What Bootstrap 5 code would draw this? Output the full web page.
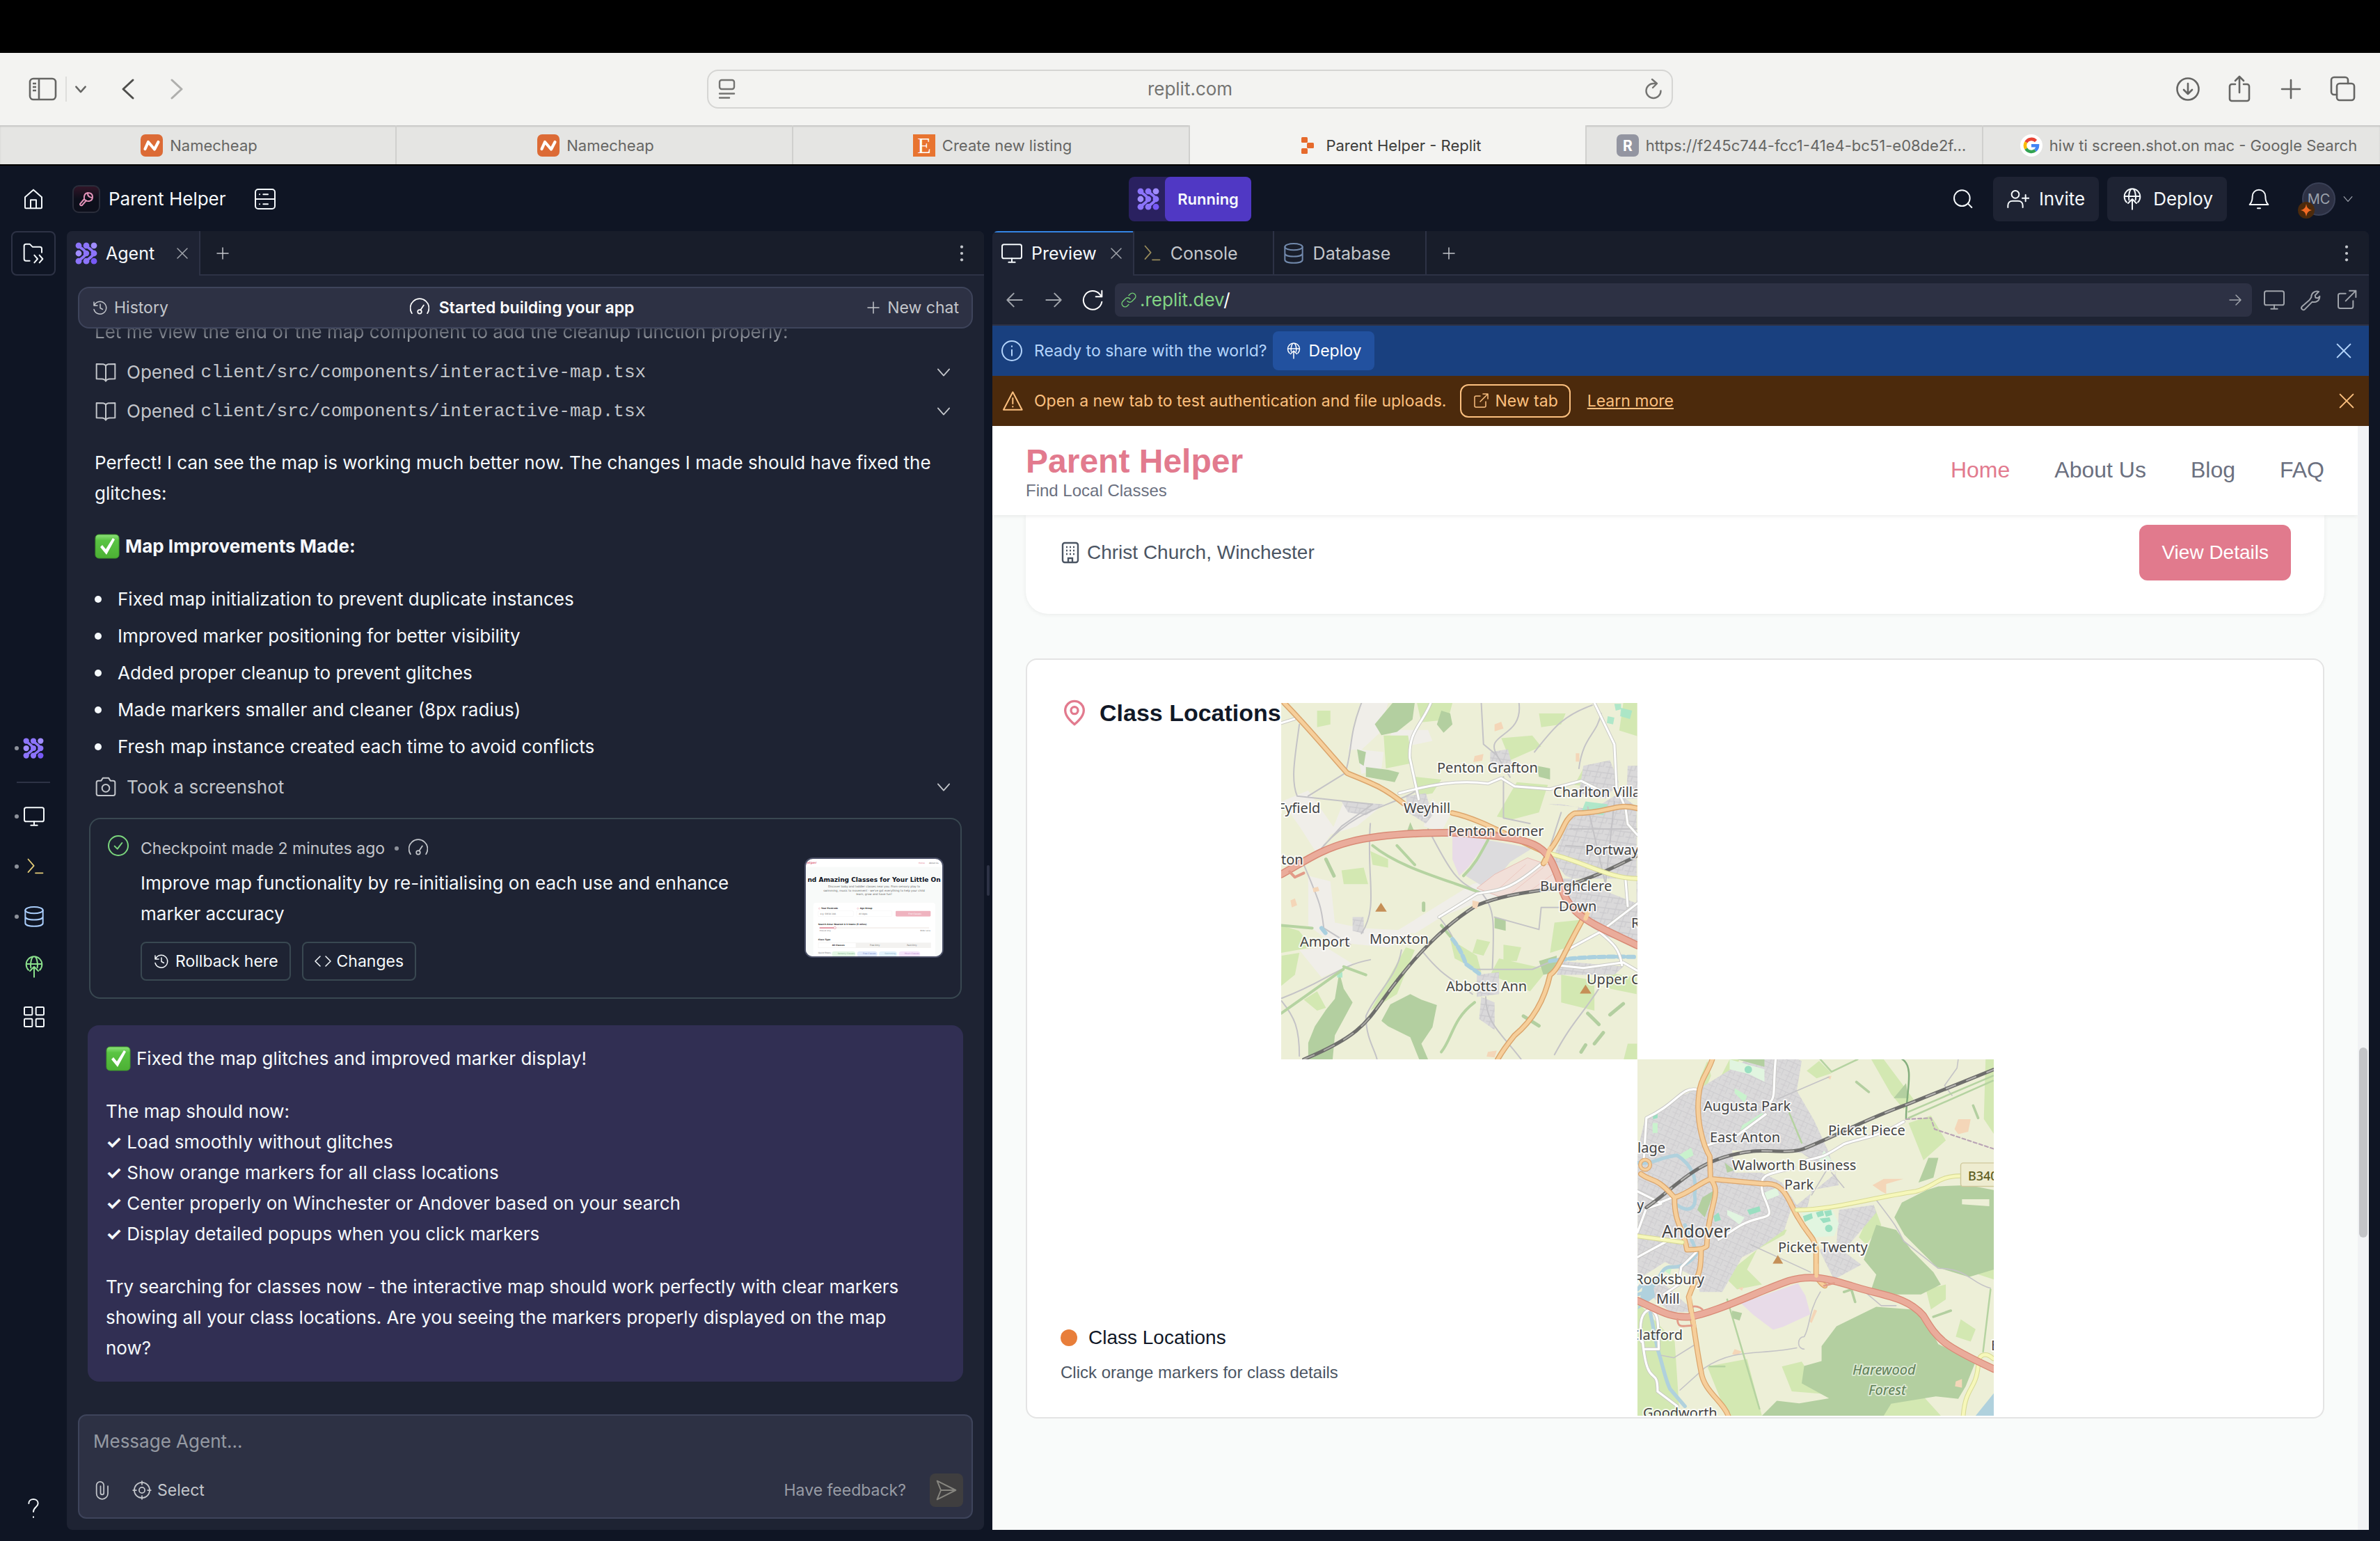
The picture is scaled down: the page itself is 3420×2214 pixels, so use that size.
<!DOCTYPE html>
<html lang="en">
<head>
<meta charset="utf-8">
<meta name="viewport" content="width=device-width, initial-scale=1">
<title>Parent Helper - Replit</title>
<link rel="stylesheet" href="https://cdn.jsdelivr.net/npm/bootstrap@5.3.0/dist/css/bootstrap.min.css">
<style>
:root{--ui:Inter,"Noto Sans",sans-serif;--site:"Liberation Sans",Arial,sans-serif;--ink:#0f1524;--pane:#1e2333;--strip:#181d2a;--raise:#2d3144;--line:#2d3245;--edge:#3e445b;--dim:#c3c6cb}
html,body{height:100%}
body{margin:0;background:#000;font-family:var(--ui);font-size:26px;line-height:44px;color:#f5f9fc;overflow:hidden}
svg{flex:none;display:block}
.ic{width:32px;height:32px;fill:none;stroke:currentColor;stroke-width:1.5;stroke-linecap:round;stroke-linejoin:round}
.ic-24{width:24px;height:24px}.ic-28{width:28px;height:28px}.ic-20{width:20px;height:20px}
.ic-40{width:40px;height:40px;stroke-width:2.6}
button{background:none;border:0;padding:0;color:inherit;font:inherit;display:flex;align-items:center;white-space:nowrap}
a{color:inherit;text-decoration:none}
input,textarea{background:none;border:0;color:inherit;font:inherit;outline:0;min-width:0}
.notch{height:76px;flex:none}
/* browser chrome */
.chrome-bar{height:104px;flex:none;background:#f3f3f1;color:#666664;padding:0 34px}
.chrome-bar .side{flex:1 1 0}
.chrome-bar .tools{gap:34px}
.chrome-bar .step{margin-left:46px}
.addr{width:1388px;max-width:42%;height:56px;border:2px solid #d5d5d3;border-radius:16px;padding:0 12px;color:#747472}
.addr input{text-align:center;font-size:26px;flex:1}
.tabrow{height:56px;flex:none;background:#e5e5e3;color:#666664;font-size:22px;line-height:28px;box-shadow:inset 0 2px 2px #c6c6c4}
.tabrow a{flex:0 0 16.6667%;min-width:0;gap:10px;padding:2px 20px 0 24px;border-right:2px solid #d0d0ce;white-space:nowrap}
.tabrow a.on{background:#f3f3f1;color:#3c3c3a}
.tabrow a.wide{padding-left:40px}
.tabrow svg{width:32px;height:32px}
/* workspace */
.work{background:var(--ink);border-top:2px solid #000;min-height:0}
.top-row{height:94px;flex:none;padding:2px 32px 0}
.top-row .side{flex:1 1 0}
.top-row .logo{margin:0 12px 0 40px}
.top-row .store{margin-left:40px}
.top-row .bell{margin-left:30px}
.solid-btn{height:64px;border-radius:8px;background:var(--pane);padding:0 20px;gap:14px}
.run-box{background:#2a2160;border-radius:8px;height:64px;padding-left:12px;gap:8px}
.run-box span{background:#5038c4;border-radius:8px;height:64px;padding:0 18px;display:flex;align-items:center;font-size:22px;font-weight:600}
.avatar{width:48px;height:48px;border-radius:50%;background:var(--raise);border:2px solid #3a4056;color:#9ca1ab;font-size:20px;position:relative;margin-left:46px}
.avatar svg{position:absolute;left:-8px;bottom:-6px}
.rail{width:96px;flex:none;padding:0 8px 0 0}
.rail .folder{width:64px;height:64px;border:2px solid var(--line);border-radius:8px;margin-left:8px;justify-content:center}
.rail .tools{margin-left:-8px}
.rail .tool{height:72px;gap:6px;padding-left:21px}
.rail hr{width:48px;margin:12px 0 12px 24px;border-color:var(--line);border-width:2px;opacity:1}
.rail .help{padding:0 0 14px 24px}
.pip{width:6px;height:6px;border-radius:50%;background:#8d919a}
.grow-a{flex:1.01 1 0}.grow-b{flex:1.03 1 0}
.panel{background:var(--pane);border-radius:8px;overflow:hidden;min-width:0}
.agent{flex:1318 1 0}.preview{flex:1978 1 0;border-bottom-left-radius:0;border-bottom-right-radius:0}
.gut{width:12px;flex:none;align-items:center}
.gut i{width:4px;height:44px;border-radius:2px;background:var(--line);margin-left:4px}
.strip{height:64px;flex:none;background:var(--strip);box-shadow:inset 0 -2px var(--line);color:var(--dim);font-size:25px}
.strip .tab{padding:0 12px 0 12px;border-right:2px solid var(--line);gap:12px}
.strip .tab.on{background:var(--pane);color:#f5f9fc}
.strip .tab.mark-on{box-shadow:inset 0 2px #3485e4}
.strip .tab.rest{padding-right:50px}
.strip .shut{color:#a0a4ab;margin-left:4px}
.strip .more{padding-right:18px}
.strip .add{padding:0 20px}
.hist{height:60px;margin:16px 16px 0;border:2px solid var(--edge);border-radius:16px;background:var(--raise);font-size:23px;padding:0 18px;flex:none;color:var(--dim)}
.hist>*{flex:1 1 0}
.hist .now{gap:14px;padding-right:10px}
.chat{min-height:0;overflow:hidden;padding:0 30px 47px 30px}
.chat>*{flex:none}
.chat p{margin:0}
.chat .gap-b{margin-bottom:32px}
.txt{padding:0 0 0 10px}
.fade-line{background:linear-gradient(#3a3f4c 25%,#a3a7ae 80%);-webkit-background-clip:text;background-clip:text;color:transparent}
.act{height:56px;padding:0 14px 0 10px;color:var(--dim);gap:14px}
.act code{font:26px/44px "Liberation Mono",monospace;color:inherit;margin-left:-5px}
.bul{margin:32px 0 8px;padding-left:10px;display:flex;flex-direction:column;gap:9px;list-style:none}
.bul li{display:flex;align-items:center}
.bul li::before{content:"";width:10px;height:10px;border-radius:50%;background:currentColor;margin-right:23px}
.okbox{display:inline-block;width:36px;height:36px;vertical-align:-9px;margin-right:8px}
.ckpt{margin:16px 2px 0;border:2px solid #394851;border-radius:16px;padding:22px 24px 24px;gap:16px}
.ckpt .meta{font-size:23px;line-height:40px;color:var(--dim);gap:14px}
.ckpt .acts{margin-top:18px;gap:16px}
.line-btn{height:56px;border:2px solid #394851;border-radius:8px;padding:0 16px;gap:8px;font-size:23px}
.shot{width:200px;height:144px;border:2px solid #4a4f66;border-radius:12px;background:#fff}
.said{margin-top:38px;background:#312f53;border-radius:16px;padding:26px 52px 26px 26px}
.compose{height:150px;margin:0 16px 16px;border:2px solid var(--edge);border-radius:12px;background:var(--raise);padding:15px 12px 15px 20px;flex:none;color:var(--dim)}
.compose .foot{font-size:23px}
.compose textarea{height:44px;resize:none;overflow:hidden;padding:0}
.compose textarea::placeholder{color:#959aa3}
.compose .clip{margin-right:28px}
.compose .ask{margin-right:34px;color:#989ca5}
.send{width:48px;height:48px;border-radius:8px;background:#3f3e3f;color:#86857f;justify-content:center}
.urlrow{height:72px;flex:none;border-bottom:2px solid var(--line);padding:0 16px 0 16px;gap:24px;color:#a0a4ab}
.urlfield{flex:1;height:48px;border-radius:8px;background:var(--raise);padding:0 12px 0 8px;gap:4px;margin-left:-8px;margin-right:-8px;color:#fff}
.urlrow .trio{gap:20px}
.note{height:72px;flex:none;font-size:23px;padding:0 20px 0 12px}
.note .msg{margin:0 8px 0 16px}
.note.info{background:#19407f;color:#b3d4fb}.note.warn{background:#4c2a0c;color:#fcc07f;padding-right:16px}
.note .go{height:56px;border-radius:8px;background:#22519f;color:#fff;padding:0 18px;gap:10px}
.note .out{height:48px;border:2px solid #fcc07f;border-radius:12px;padding:0 16px;gap:8px;margin:0 24px 0 12px}
/* previewed site */
.site{font-family:var(--site);font-size:28px;line-height:40px;color:#111827;background:#f9fbfa;min-height:0;flex:1}
.site-head{height:128px;background:#fff;box-shadow:0 2px 6px rgba(0,0,0,.07);padding:2px 48px 0;position:relative;flex:none}
.site-head h1{font-size:48px;line-height:56px;font-weight:700;color:#e27a8e;margin:0}
.site-head small{font-size:24px;line-height:28px;color:#6b7080;display:block}
.site-head nav{gap:64px;font-size:32px;color:#6b7080;padding-bottom:4px}
.site-head .cur{color:#e27a8e}
.venue{margin:0 48px;background:#fff;border-radius:0 0 32px 32px;box-shadow:0 1px 6px rgba(0,0,0,.07);padding:14px 48px 48px;color:#4b5563;flex:none}
.pinkbtn{background:#e17a8d;color:#fff;border-radius:12px;height:80px;padding:0 32px}
.mapcard{margin:64px 48px 0;border:2px solid #e4e4e4;border-radius:16px;background:#fff;display:grid;grid-template:512px 512px / max-content 512px 512px;padding:62px 0 2px 48px;flex:none}
.mapcard h2{font-size:34px;line-height:40px;font-weight:700;margin:0}
.mapcard .ttl{gap:16px;height:40px;margin-top:-6px}
.t2{grid-area:2/3}.key{grid-area:2/1/3/3;align-self:end;padding-bottom:46px}
.key i{width:24px;height:24px;border-radius:50%;background:#e87e3a}
.key p{font-size:24px;line-height:32px;color:#4b5563;margin:14px 0 0}
.sbar{width:16px;flex:none;background:#f1f2f4}
.sbar b{flex:273 1 0;background:#c3c4c7;border-radius:8px;margin:0 2px}
.sbar .above{flex:893 1 0}.sbar .below{flex:420 1 0}
.ns *{vector-effect:non-scaling-stroke}
.lbl text{font-family:"Noto Sans",sans-serif;font-size:20px;fill:#444;stroke:#fff;stroke-opacity:.75;stroke-width:4px;paint-order:stroke;stroke-linejoin:round}
.lbl .wood text{fill:#5f8058;stroke-opacity:.5;font-style:italic}
.lbl .town{font-size:25px}
.lbl .ref{font-size:18px;fill:#5d5c1e;stroke:none;font-weight:500}
</style>
</head>
<body class="d-flex flex-column">
<svg width="0" height="0" class="position-absolute" aria-hidden="true">
<defs>
<linearGradient id="grn" x1="0" y1="0" x2="0" y2="1"><stop offset="0" stop-color="#8fe37c"/><stop offset=".25" stop-color="#5ac443"/><stop offset="1" stop-color="#4cb034"/></linearGradient>
<symbol id="agent" viewBox="0 0 32 32"><g fill="#8c74fb"><circle cx="5" cy="4.800" r="4.400"/><circle cx="16" cy="4.800" r="4.400"/><circle cx="27" cy="4.800" r="4.400" fill="#a08cff"/><circle cx="5" cy="16" r="4.400" fill="#a08cff"/><circle cx="16" cy="16" r="4.200"/><circle cx="27" cy="16" r="4.400"/><circle cx="5" cy="27.200" r="4.400"/><circle cx="16" cy="27.200" r="4.400"/><circle cx="27" cy="27.200" r="4.400" fill="#7759f5"/></g><path d="M6.500 6.500C9 9 11.500 10 13.500 12.500c2 2.500 2 4.500 0 7C11.500 22 9 23 6.500 25.500M17.500 6.500C20 9 22.500 10 24.500 12.500c2 2.500 2 4.500 0 7C22.500 22 20 23 17.500 25.500" fill="none" stroke="#8c74fb" stroke-width="4" stroke-linecap="round"/></symbol>
<symbol id="ok" viewBox="0 0 36 36"><rect x="1" y="1" width="34" height="34" rx="5" fill="url(#grn)" stroke="#3f9a2b"/><path d="M8 19l3-3 5 6L26 6l3 2-12 22z" fill="#fff"/></symbol>
<symbol id="x" viewBox="0 0 24 24"><path d="M5 5l14 14M19 5L5 19"/></symbol>
<symbol id="plus" viewBox="0 0 24 24"><path d="M12 4v16M4 12h16"/></symbol>
<symbol id="down" viewBox="0 0 24 24"><path d="M5 8l7 8 7-8"/></symbol>
<symbol id="dots" viewBox="0 0 24 24"><g fill="currentColor" stroke="none"><circle cx="12" cy="4" r="1.800"/><circle cx="12" cy="12" r="1.800"/><circle cx="12" cy="20" r="1.800"/></g></symbol>
<symbol id="mon" viewBox="0 0 24 24"><rect x="1.500" y="2.500" width="21" height="15" rx="2"/><path d="M12 17.500v4M8.500 21.500h7"/></symbol>
<symbol id="term" viewBox="0 0 24 24"><path d="M3 3l7 8-7 8M12 20h9"/></symbol>
<symbol id="db" viewBox="0 0 24 24"><ellipse cx="12" cy="5" rx="9.500" ry="3.500"/><path d="M2.500 5v14c0 4.500 19 4.500 19 0V5M2.500 12c0 4.500 19 4.500 19 0"/></symbol>
<symbol id="dep" viewBox="0 0 24 24"><path d="M6 15.500a8.500 8.500 0 1 1 12 0M3.500 9h17M8.500 13C7.500 7 9.500 1 12 1s4.500 6 3.500 12M12 12v11M7.500 16.500L12 12l4.500 4.500"/></symbol>
<symbol id="hist" viewBox="0 0 24 24"><path d="M3 4v5h5M3.500 8.500a9 9 0 1 1-.5 6M12 7v5.500l3.500 2"/></symbol>
<symbol id="gauge" viewBox="0 0 24 24"><path d="M2.500 19a11.500 11.500 0 1 1 19 0M13 15l4-6"/><circle cx="12" cy="17" r="2.400"/></symbol>
<symbol id="larr" viewBox="0 0 24 24"><path d="M20 12H4M11 5l-7 7 7 7"/></symbol>
<symbol id="rarr" viewBox="0 0 24 24"><path d="M4 12h16M13 5l7 7-7 7"/></symbol>
<symbol id="ext" viewBox="0 0 24 24"><path d="M11 5H5a2 2 0 0 0-2 2v12a2 2 0 0 0 2 2h12a2 2 0 0 0 2-2v-6M15 2h7v7M22 2L11 13"/></symbol>
<symbol id="book" viewBox="0 0 24 24"><path d="M12 5c-1-2-3-2-10-2v16c7 0 9 0 10 2.500C13 19 15 19 22 19V3c-7 0-9 0-10 2zM12 5v16"/></symbol>
<symbol id="link" viewBox="0 0 24 24"><path d="M10 13.500a4.500 4.500 0 0 0 6.500.5l4-4a4.500 4.500 0 0 0-6.500-6.500l-2 2M14 10.500a4.500 4.500 0 0 0-6.500-.5l-4 4A4.500 4.500 0 0 0 10 20.500l2-2"/></symbol>
</defs></svg>

<div class="notch"></div>
<header class="chrome-bar d-flex align-items-center">
  <div class="side d-flex align-items-center">
    <button aria-label="Sidebar"><svg width="56" height="36" viewBox="0 0 56 36" fill="none" stroke="currentColor" stroke-width="2.600"><rect x="9" y="3" width="37" height="30" rx="5"/><path d="M22 3v30M13 10h5M13 15h5M13 20h5" /></svg></button>
    <svg width="4" height="36" class="ms-1"><path d="M1 0v36" stroke="#dededc" stroke-width="2"/></svg>
    <button aria-label="Tab groups" class="ms-2"><svg class="ic ic-20" viewBox="0 0 24 24"><path d="M4 8l8 9 8-9" stroke-width="3"/></svg></button>
    <button aria-label="Back" class="step"><svg width="24" height="36" viewBox="0 0 24 36" fill="none" stroke="#4e4e4c" stroke-width="3" stroke-linecap="round" stroke-linejoin="round"><path d="M19 5L5 18l14 13"/></svg></button>
    <button aria-label="Forward" class="step"><svg width="24" height="36" viewBox="0 0 24 36" fill="none" stroke="#afafad" stroke-width="3" stroke-linecap="round" stroke-linejoin="round"><path d="M5 5l14 13L5 31"/></svg></button>
  </div>
  <div class="addr d-flex align-items-center">
    <svg width="28" height="32" viewBox="0 0 28 32" fill="none" stroke="currentColor" stroke-width="2.400" stroke-linecap="round"><rect x="4" y="3" width="21" height="13" rx="3"/><path d="M4 22.500h21M4 28.500h14"/></svg>
    <input type="text" value="replit.com" aria-label="Address">
    <button aria-label="Reload"><svg width="28" height="32" viewBox="0 0 28 32" fill="none" stroke="currentColor" stroke-width="2.400" stroke-linecap="round" stroke-linejoin="round"><path d="M24.500 18.500a10.500 10.500 0 1 1-10.500-10.500h4M12 2l7 6-6 6"/></svg></button>
  </div>
  <div class="side tools d-flex align-items-center justify-content-end">
    <button aria-label="Downloads"><svg class="ic ic-40" viewBox="0 0 40 40"><circle cx="20" cy="20" r="15.500"/><path d="M20 12v15M14 21l6 6 6-6"/></svg></button>
    <button aria-label="Share"><svg class="ic ic-40" viewBox="0 0 40 40"><path d="M14 13h-5a3 3 0 0 0-3 3v18a3 3 0 0 0 3 3h22a3 3 0 0 0 3-3V16a3 3 0 0 0-3-3h-5M20 25V2M14 8l6-6 6 6"/></svg></button>
    <button aria-label="New tab"><svg class="ic ic-40" viewBox="0 0 40 40"><path d="M20 7v26M7 20h26"/></svg></button>
    <button aria-label="Tabs"><svg class="ic ic-40" viewBox="0 0 40 40"><rect x="12" y="12" width="25" height="24" rx="4"/><path d="M12 28H8a4 4 0 0 1-4-4V7a4 4 0 0 1 4-4h16a4 4 0 0 1 4 4v5"/></svg></button>
  </div>
</header>
<nav class="tabrow d-flex" aria-label="Browser tabs">
  <a href="#" class="d-flex align-items-center justify-content-center"><svg viewBox="0 0 32 32"><rect width="32" height="32" rx="7" fill="#dc6b36"/><path d="M6.500 21L11 11l9 10.500L25.500 11" fill="none" stroke="#fff" stroke-width="4.200" stroke-linecap="round" stroke-linejoin="round"/></svg>Namecheap</a>
  <a href="#" class="d-flex align-items-center justify-content-center"><svg viewBox="0 0 32 32"><rect width="32" height="32" rx="7" fill="#dc6b36"/><path d="M6.500 21L11 11l9 10.500L25.500 11" fill="none" stroke="#fff" stroke-width="4.200" stroke-linecap="round" stroke-linejoin="round"/></svg>Namecheap</a>
  <a href="#" class="d-flex align-items-center justify-content-center"><svg viewBox="0 0 32 32"><rect width="32" height="32" fill="#e87430"/><text x="16" y="27" text-anchor="middle" font-family="Liberation Serif, serif" font-size="32" fill="#fff">E</text></svg>Create new listing</a>
  <a href="#" class="on d-flex align-items-center justify-content-center"><svg viewBox="0 0 32 32" fill="#e66a2c"><rect x="7" y="4" width="9" height="8" rx="1.500"/><rect x="15" y="12" width="10" height="8" rx="1.500"/><rect x="7" y="20" width="9" height="8" rx="1.500"/></svg>Parent Helper - Replit</a>
  <a href="#" class="wide d-flex align-items-center justify-content-center"><svg viewBox="0 0 32 32"><rect width="32" height="32" rx="7" fill="#9395a1"/><text x="16" y="24" text-anchor="middle" font-family="Inter, sans-serif" font-weight="700" font-size="21" fill="#fff">R</text></svg>https://f245c744-fcc1-41e4-bc51-e08de2f…</a>
  <a href="#" class="wide d-flex align-items-center justify-content-center border-end-0"><svg viewBox="0 0 32 32" fill="none" stroke-width="4.600"><circle cx="16" cy="16" r="16" fill="#fff"/><path d="M22.500 9.600A9 9 0 0 0 8.300 11.400" stroke="#e94335"/><path d="M8.300 11.400a9 9 0 0 0 0 9.200" stroke="#fabb05"/><path d="M8.300 20.600A9 9 0 0 0 21.600 23" stroke="#34a353"/><path d="M21.600 23A9 9 0 0 0 25 16.200H16" stroke="#4285f4"/></svg>hiw ti screen.shot.on mac - Google Search</a>
</nav>

<div class="work flex-grow-1 d-flex flex-column">
  <div class="top-row d-flex align-items-center">
    <div class="side d-flex align-items-center">
      <a href="#" aria-label="Home"><svg class="ic" viewBox="0 0 24 24"><path d="M3 10l9-8 9 8v11a1 1 0 0 1-1 1H4a1 1 0 0 1-1-1zM9 22v-9h6v9"/></svg></a>
      <svg width="40" height="40" viewBox="0 0 40 40" class="logo"><defs><linearGradient id="hb" x1="0" y1="0" x2="0" y2="1"><stop offset="0" stop-color="#331528"/><stop offset=".5" stop-color="#0d0f1b"/></linearGradient></defs><rect x="1" y="1" width="38" height="38" rx="8" fill="url(#hb)" stroke="#2a2d3a" stroke-width="2"/><g fill="none" stroke="#e493b9" stroke-width="2" stroke-linecap="round"><path d="M17 20L11 27q0 3 3 2l6-7M17 20q-1-8 5-9 7 0 7 6 0 5-5 6-5 0-7-3zM22 12q0 5 6 6"/></g></svg>
      <span>Parent Helper</span>
      <button aria-label="Storage" class="store"><svg class="ic" viewBox="0 0 24 24"><rect x="1.500" y="1.500" width="21" height="21" rx="3"/><path d="M1.500 12h21M6 7h.1M6 17.500h.1M10 7h5M10 17.500h5"/></svg></button>
    </div>
    <button class="run-box"><svg width="32" height="32"><use href="#agent"/></svg><span>Running</span></button>
    <div class="side d-flex align-items-center justify-content-end">
      <button aria-label="Search"><svg class="ic me-4" viewBox="0 0 24 24" ><circle cx="11.500" cy="11" r="8.500"/><path d="M18 17l4 4"/></svg></button>
      <button class="solid-btn ms-1 me-2"><svg class="ic" viewBox="0 0 24 24"><circle cx="9" cy="7" r="4"/><path d="M1 21v-2c0-3 2-5 5-5h6c3 0 5 2 5 5v2M20 7.500v7M16.500 11h7"/></svg>Invite</button>
      <button class="solid-btn ms-1"><svg class="ic"><use href="#dep"/></svg>Deploy</button>
      <button aria-label="Notifications" class="bell"><svg class="ic" viewBox="0 0 24 24"><path d="M5 9a7 7 0 0 1 14 0c0 5 1 7 3 9H2c2-2 3-4 3-9zM10.500 22h3"/></svg></button>
      <button class="avatar justify-content-center" aria-label="Account">MC<svg width="24" height="24" viewBox="0 0 24 24"><circle cx="12" cy="12" r="12" fill="#4c2a0c"/><path d="M12 3q1 8 8 9-7 1-8 9-1-8-8-9 7-1 8-9z" fill="#f26a24"/></svg></button>
      <svg class="ic ic-20 ms-2 me-1" style="color:#9ca1ab"><use href="#down"/></svg>
    </div>
  </div>

  <main class="d-flex flex-grow-1 pe-3 pb-3" style="min-height:0">
    <aside class="rail d-flex flex-column ps-2">
      <button class="folder" aria-label="Files"><svg class="ic" viewBox="0 0 24 24"><path d="M8 20H4a2 2 0 0 1-2-2V4a2 2 0 0 1 2-2h4l3 3h8a2 2 0 0 1 2 2v4M13 14l3.500 4-3.500 4M18.500 14l3.500 4-3.500 4"/></svg></button>
      <div class="grow-a"></div>
      <div class="tools">
        <button class="tool" aria-label="Agent"><i class="pip"></i><svg width="30" height="30"><use href="#agent"/></svg></button>
        <hr>
        <button class="tool" aria-label="Preview"><i class="pip"></i><svg class="ic"><use href="#mon"/></svg></button>
        <button class="tool" aria-label="Console"><i class="pip"></i><svg class="ic ic-28 ms-1" style="color:#e5cd78"><use href="#term"/></svg></button>
        <button class="tool" aria-label="Database"><i class="pip"></i><svg class="ic" style="color:#a9cdfb"><use href="#db"/></svg></button>
        <button class="tool" aria-label="Deployments"><i class="pip invisible"></i><svg class="ic" style="color:#8be08c"><use href="#dep"/></svg></button>
        <button class="tool" aria-label="All tools"><i class="pip invisible"></i><svg class="ic" viewBox="0 0 24 24"><rect x="1.500" y="1.500" width="8.500" height="8.500" rx="1"/><rect x="14" y="1.500" width="8.500" height="8.500" rx="1"/><rect x="1.500" y="14" width="8.500" height="8.500" rx="1"/><rect x="14" y="14" width="8.500" height="8.500" rx="1"/></svg></button>
      </div>
      <div class="grow-b"></div>
      <button class="help" aria-label="Help"><svg class="ic" viewBox="0 0 24 24"><path d="M7 6c0-6 10-6 10 0 0 4-5 4-5 9M12 20.500v.5"/></svg></button>
    </aside>

    <section class="panel agent d-flex flex-column">
      <div class="strip d-flex">
        <div class="tab on d-flex align-items-center"><svg width="32" height="32"><use href="#agent"/></svg><span>Agent</span><button aria-label="Close" class="shut ms-3"><svg class="ic ic-24"><use href="#x"/></svg></button></div>
        <button class="add" aria-label="New tab"><svg class="ic ic-24"><use href="#plus"/></svg></button>
        <button class="more ms-auto" aria-label="More"><svg class="ic ic-28"><use href="#dots"/></svg></button>
      </div>
      <div class="hist d-flex align-items-center">
        <button class="gap-2"><svg class="ic ic-24"><use href="#hist"/></svg>History</button>
        <button class="now justify-content-center fw-semibold text-white"><svg class="ic ic-28"><use href="#gauge"/></svg>Started building your app</button>
        <button class="gap-2 justify-content-end"><svg class="ic ic-24"><use href="#plus"/></svg>New chat</button>
      </div>
      <div class="chat flex-grow-1 d-flex flex-column justify-content-end">
        <p class="txt fade-line mb-2">Let me view the end of the map component to add the cleanup function properly:</p>
        <button class="act"><svg class="ic"><use href="#book"/></svg><span>Opened</span> <code>client/src/components/interactive-map.tsx</code><svg class="ic ic-28 ms-auto"><use href="#down"/></svg></button>
        <button class="act mb-4"><svg class="ic"><use href="#book"/></svg><span>Opened</span> <code>client/src/components/interactive-map.tsx</code><svg class="ic ic-28 ms-auto"><use href="#down"/></svg></button>
        <p class="txt gap-b">Perfect! I can see the map is working much better now. The changes I made should have fixed the glitches:</p>
        <p class="txt fw-bold"><svg class="okbox"><use href="#ok"/></svg>Map Improvements Made:</p>
        <ul class="bul">
          <li>Fixed map initialization to prevent duplicate instances</li>
          <li>Improved marker positioning for better visibility</li>
          <li>Added proper cleanup to prevent glitches</li>
          <li>Made markers smaller and cleaner (8px radius)</li>
          <li>Fresh map instance created each time to avoid conflicts</li>
        </ul>
        <button class="act"><svg class="ic" viewBox="0 0 24 24"><path d="M2 7a2 2 0 0 1 2-2h3l2-3h6l2 3h3a2 2 0 0 1 2 2v12a2 2 0 0 1-2 2H4a2 2 0 0 1-2-2z"/><circle cx="12" cy="13" r="4"/></svg><span>Took a screenshot</span><svg class="ic ic-28 ms-auto"><use href="#down"/></svg></button>
        <article class="ckpt d-flex align-items-center">
          <svg class="ic align-self-start" viewBox="0 0 24 24" style="color:#7bd67d"><circle cx="12" cy="12" r="10.500"/><path d="M8 12.500l3 3 5-6.500"/></svg>
          <div class="flex-grow-1">
            <div class="meta d-flex align-items-center mb-2"><span>Checkpoint made 2 minutes ago</span><i class="pip"></i><svg class="ic ic-28"><use href="#gauge"/></svg></div>
            <p>Improve map functionality by re-initialising on each use and enhance marker accuracy</p>
            <div class="acts d-flex"><button class="line-btn"><svg class="ic ic-24"><use href="#hist"/></svg>Rollback here</button><button class="line-btn"><svg class="ic ic-24" viewBox="0 0 24 24"><path d="M8 5l-7 7 7 7M16 5l7 7-7 7"/></svg>Changes</button></div>
          </div>
          <svg class="shot ms-4" viewBox="54 75 588 420" preserveAspectRatio="none" font-family="DejaVu Sans, sans-serif" font-size="9" fill="#666">
            <rect x="54" y="110" width="588" height="385" fill="#f8faf9"/>
            <text x="48" y="95" font-size="14" font-weight="700" fill="#e17a8d">Helper</text><text x="540" y="96" fill="#e17a8d">Home</text><text x="585" y="96">About Us</text>
            <text x="348" y="173" text-anchor="middle" font-size="27" font-weight="700" fill="#0b1020">nd Amazing Classes for Your Little On</text>
            <g text-anchor="middle" font-size="12"><text x="348" y="199">Discover baby and toddler classes near you. From sensory play to</text><text x="348" y="215">swimming, music to movement - we've got everything to help your child</text><text x="348" y="231">learn, grow and have fun!</text></g>
            <rect x="86" y="264" width="526" height="240" rx="12" fill="#fff"/>
            <circle cx="112" cy="289" r="3" fill="none" stroke="#e17a8d"/><circle cx="278" cy="289" r="3" fill="none" stroke="#e17a8d"/>
            <g font-weight="700" fill="#222"><text x="120" y="292">Your Postcode</text><text x="287" y="292">Age Group</text><text x="107" y="360">Search Area: Nearest 2-3 towns (5 miles)</text><text x="107" y="426">Class Type</text></g>
            <rect x="107" y="299" width="152" height="24" rx="4" fill="#fff" stroke="#eee"/><text x="116" y="314">e.g. SW1A 1AA</text>
            <rect x="273" y="299" width="152" height="24" rx="4" fill="#fff" stroke="#eee"/><text x="283" y="314">All Ages</text>
            <rect x="441" y="299" width="151" height="24" rx="4" fill="#efb3bf"/><text x="496" y="314" fill="#fff">Find Classes</text>
            <rect x="113" y="370" width="472" height="5" fill="#f3efec"/><rect x="113" y="370" width="65" height="5" fill="#e0899a"/><circle cx="179" cy="372" r="5" fill="#fff" stroke="#e0899a" stroke-width="2"/>
            <text x="113" y="386" font-size="8">Closest only</text><text x="547" y="386" font-size="8">Wider area</text>
            <rect x="107" y="436" width="486" height="23" fill="#f3f2f0"/><rect x="109" y="438" width="160" height="19" fill="#fff"/><text x="167" y="451" fill="#222" font-weight="700">All Classes</text><text x="330" y="451">Free Only</text><text x="490" y="451">Paid Only</text>
            <text x="107" y="482">Quick filters:</text><rect x="166" y="473" width="102" height="24" rx="12" fill="#e4f7e6"/><rect x="275" y="473" width="87" height="24" rx="12" fill="#dfe9fb"/><rect x="369" y="473" width="78" height="24" rx="12" fill="#e3f2fb"/><rect x="455" y="473" width="92" height="24" rx="12" fill="#f5e4fa"/>
            <text x="191" y="487" fill="#7fb48a">Sensory Classes</text><text x="300" y="487" fill="#7288c8">Free Classes</text><text x="394" y="487" fill="#7ba6c4">Swimming</text><text x="480" y="487" fill="#b87fcb">Music Classes</text>
          </svg>
        </article>
        <article class="said">
          <p class="gap-b"><svg class="okbox"><use href="#ok"/></svg>Fixed the map glitches and improved marker display!</p>
          <p class="gap-b">The map should now:<br><b>✓</b> Load smoothly without glitches<br><b>✓</b> Show orange markers for all class locations<br><b>✓</b> Center properly on Winchester or Andover based on your search<br><b>✓</b> Display detailed popups when you click markers</p>
          <p>Try searching for classes now - the interactive map should work perfectly with clear markers showing all your class locations. Are you seeing the markers properly displayed on the map now?</p>
        </article>
      </div>
      <form class="compose d-flex flex-column justify-content-between">
        <textarea placeholder="Message Agent..." aria-label="Message Agent"></textarea>
        <div class="foot d-flex align-items-center">
          <button type="button" aria-label="Attach" class="clip"><svg class="ic ic-28" viewBox="0 0 24 24"><path d="M18 7v9a7 7 0 0 1-14 0V6a4.500 4.500 0 0 1 9 0v9.500a2 2 0 0 1-4 0V7"/></svg></button>
          <button type="button" class="gap-2"><svg class="ic ic-28" viewBox="0 0 24 24"><circle cx="12" cy="12" r="9.500"/><circle cx="12" cy="12" r="3.500"/><path d="M12 1v4M12 19v4M1 12h4M19 12h4"/></svg>Select</button>
          <a href="#" class="ask ms-auto">Have feedback?</a>
          <button type="button" class="send" aria-label="Send"><svg class="ic" viewBox="0 0 24 24"><path d="M2 2l20 10L2 22l4-10zM6 12h16"/></svg></button>
        </div>
      </form>
    </section>

    <div class="gut d-flex"><i></i></div>

    <section class="panel preview d-flex flex-column">
      <div class="strip d-flex">
        <div class="tab on mark-on d-flex align-items-center"><svg class="ic"><use href="#mon"/></svg><span>Preview</span><button aria-label="Close" class="shut"><svg class="ic ic-24"><use href="#x"/></svg></button></div>
        <div class="tab rest d-flex align-items-center"><svg class="ic ic-28" style="color:#978a5a"><use href="#term"/></svg><span>Console</span></div>
        <div class="tab rest d-flex align-items-center"><svg class="ic" style="color:#7189ac"><use href="#db"/></svg><span>Database</span></div>
        <button class="add" aria-label="New tab"><svg class="ic ic-24"><use href="#plus"/></svg></button>
        <button class="more ms-auto" aria-label="More"><svg class="ic ic-28"><use href="#dots"/></svg></button>
      </div>
      <div class="urlrow d-flex align-items-center">
        <button aria-label="Back"><svg class="ic"><use href="#larr"/></svg></button>
        <button aria-label="Forward"><svg class="ic"><use href="#rarr"/></svg></button>
        <button aria-label="Reload" class="text-white"><svg class="ic" viewBox="0 0 24 24"><path d="M22 14a10 10 0 1 1-2.500-8.500L22 8.500M22 2v6.500h-6.500"/></svg></button>
        <div class="urlfield d-flex align-items-center"><svg class="ic ic-24" style="color:#70c973"><use href="#link"/></svg><span class="flex-grow-1"><span style="color:#82d384">.replit.dev</span>/</span><svg class="ic ic-24" style="color:#a0a4ab"><use href="#rarr"/></svg></div>
        <div class="trio d-flex">
        <button aria-label="Device"><svg class="ic"><use href="#mon"/></svg></button>
        <button aria-label="Devtools"><svg class="ic" viewBox="0 0 24 24"><path d="M13 9a6 6 0 0 1 8-6l-4 4 .5 2.500L20 10l2-2c0 5-4 7-8 6l-8 8c-2 2-5-1-3-3l8-7z"/></svg></button>
        <button aria-label="Open"><svg class="ic"><use href="#ext"/></svg></button>
        </div>
      </div>
      <div class="note info d-flex align-items-center">
        <svg class="ic" viewBox="0 0 24 24"><circle cx="12" cy="12" r="10.500"/><path d="M12 11v6M12 7v.5"/></svg><span class="msg">Ready to share with the world?</span>
        <button class="go"><svg class="ic ic-24"><use href="#dep"/></svg>Deploy</button>
        <button class="ms-auto" aria-label="Dismiss"><svg class="ic"><use href="#x"/></svg></button>
      </div>
      <div class="note warn d-flex align-items-center">
        <svg class="ic" viewBox="0 0 24 24"><path d="M13 2.500L23 21.500H3zM13 9v6M13 18v.3"/></svg><span class="msg">Open a new tab to test authentication and file uploads.</span>
        <button class="out"><svg class="ic ic-24"><use href="#ext"/></svg>New tab</button><a href="#" class="text-decoration-underline">Learn more</a>
        <button class="ms-auto" aria-label="Dismiss"><svg class="ic"><use href="#x"/></svg></button>
      </div>
      <div class="d-flex flex-grow-1" style="min-height:0">
        <div class="site d-flex flex-column overflow-hidden">
          <div class="site-head d-flex align-items-center justify-content-between">
            <div><h1>Parent Helper</h1><small>Find Local Classes</small></div>
            <nav class="d-flex"><a href="#" class="cur">Home</a><a href="#">About Us</a><a href="#">Blog</a><a href="#">FAQ</a></nav>
          </div>
          <div class="venue d-flex align-items-center">
            <svg width="32" height="32" viewBox="0 0 32 32" fill="none" stroke="currentColor" stroke-width="2.400" class="me-2"><rect x="5" y="2" width="22" height="28" rx="3"/><path d="M13 30v-6h6v6M10 8h2M15 8h2M20 8h2M10 13h2M15 13h2M20 13h2M10 18h2M15 18h2M20 18h2"/></svg>Christ Church, Winchester
            <button class="pinkbtn ms-auto">View Details</button>
          </div>
          <div class="mapcard">
            <div class="ttl d-flex align-items-center"><svg width="40" height="40" viewBox="0 0 24 24" fill="none" stroke="#e27a8e" stroke-width="2"><path d="M20 10c0 6-8 12-8 12s-8-6-8-12a8 8 0 0 1 16 0z"/><circle cx="12" cy="10" r="3"/></svg><h2>Class Locations</h2></div>

            <svg width="512" height="512" viewBox="0 0 512 512" aria-label="Map of Weyhill">
              <svg class="ns" width="512" height="512" viewBox="599 202 803 1295" preserveAspectRatio="none" fill="none" stroke-linecap="round" stroke-linejoin="round">
                <defs><pattern id="st" width="24" height="40" patternUnits="userSpaceOnUse" patternTransform="rotate(12)"><rect width="24" height="40" fill="#dad9da"/><path d="M0 10h24M9 0v40M0 28h15M18 10v18" stroke="#cbcacd" stroke-width="1.200"/></pattern></defs>
                <rect x="599" y="202" width="803" height="1295" fill="#edefd7"/>
                <g fill="#f0eee9"><path d="M780 202h60l-20 110-40 60-30 0zM770 370l60 10-5 60-45 20zM850 300l80 0 10 40-60 20-40-20zM740 560l90 10-60 80-60 30zM660 830l50 20 10 150 60 20 120 10-60 60-130-20-50-60zM940 550l40 60-20 60-40-20zM1030 860l130-60 60 30-200 110-60 40-60 60-40-10zM600 560l60-40 60 140-40 90-40-100zM640 1100l60-10 60 60-70 50z"/></g>
                <g fill="#d3e8b2"><path d="M830 320h55l10 100-60 20zM905 202h80l-10 60-60 10zM1095 330l70-10 20 40-70 50zM1130 490l70 10-20 100-60 25-35-10zM680 230l30 0 0 50-30 10zM600 1120l40-10-10 80-31 40zM735 810l50-10 10 60-55 0zM800 740l40 30 0 30-35-10zM900 1100l-40 160-60 60 80-230zM1215 1000l60-10-30 100-40 20zM1230 1190l75 20 0 110-75-30zM1100 1080l40 10-10 50-30 0zM1040 1060l30 10-15 50-25-10zM1090 1130l110 40-40 80-90-60zM650 1280l30-30 20 60-20 10zM980 1060l60 60 10 60-60-50zM1370 202h31v120l-40-20zM900 470l60 10-20 50-35 10zM1280 440l60 10-20 60-60-10zM599 1010l40 20 30 60-70 20z"/><path d="M1180 240l60 0-10 40-45 10zM1330 1180l70 20v60l-60-20zM1380 1440h21v57h-30z"/></g>
                <g fill="#b3cfa0"><path d="M850 202h50l-5 60-35 45-35 12-15-40zM960 230l20 10 5 40-20 30-15-30zM790 435l50 10 25 10-10 35-65-20zM770 370l20 10-5 50-10-10zM1175 430l30 10 0 40-25-10zM890 635l12 45h-22zM890 1260l25 20 35 20-10 80-25 60 15 57h-20l-20-80-50-40-15-20 20-60zM730 1180l10 60 20 50-20 60-20 60-5 87h-55l0-60 15-60 25-60 20-40zM1080 980l25 10 0 40-25-10zM1180 1140l40-20 0 60-30 10z"/><path d="M1145 1340l35 35M1290 1330l25 40M1370 1295l-30 40M1325 1400l-20 40M1285 1445l-10 25M920 930l0 25M700 770l18 60" stroke="#b3cfa0" stroke-width="5"/></g>
                <g fill="url(#st)"><path d="M1200 570l70 10-30 80-30 110 30 60 160 100v-350l-40-50-60 60-70-20zM1280 430l60-20 20 80-30 60-60-20zM1380 430h22v120h-25zM1070 380l40-10 10 60-50 10zM880 540l45-10 15 80-15 30-40-40zM735 560l95 10-40 40-40-10zM1220 840l182 0v240l-70-30-60-60-30-90zM1230 1140l140 20-20 30-130 0zM1040 1190l50-10 0 80-50 10zM1050 1270l30 20 0 100-35-40zM760 980l25 0 0 60-25-10z"/></g>
                <path d="M985 680l80 20-45 100-20 30-15-60z" fill="#e8dbe8"/><path d="M1065 700l100 30-50 50-50 100-50-50z" fill="#dcdbdd"/><path d="M1155 765l55 30 20 80-140 30-50-30 40-50z" fill="#f1dfd8" stroke="#e8bdb5"/><path d="M1080 890l70-100M1120 890l70-90M1160 885l50-60" stroke="#ecc8c0"/>
                <g fill="#a7e5c8"><path d="M1350 205l15 0 0 20-12 5zM1365 220l25 10-5 30-22-10zM1335 250l15 5-3 25-14-5zM725 1180l12 0 0 20-12 0zM1285 560l50 10-10 40-50-10z" fill-opacity=".9"/></g>
                <g stroke="#c4c3c6" stroke-width="2"><path d="M780 202c-30 120-20 180-37 255M640 280c-10 120-20 200-5 260l170 30-70 80-45 80M743 457L660 540M905 520c-60 60-130 60-210 200M800 640c-10 200 20 300-20 400M650 790c40 150 40 160 45 230l60 60M1050 202l5 150 30 40 30 80M1100 470v150l60 20M1085 390c-30-80 60-60 50-188M1170 380c40-80 60-130 130-170M1270 440c10-120 40-120 50-200M930 660c40 120 60 200 120 230 30 60 30 100 25 280M600 1275c100-60 130-120 200-140M870 1100c-10 100-60 160-80 240 0 80 20 120 25 157M920 1110c40 80 60 90 110 150M1035 1170h130l60-40M600 1285c30 60 40 100 40 200M1315 1240c-40 100-60 120-100 240M1060 1270c0 100 40 140 80 227M955 980c40 80 30 90 40 100M1080 980l100 45 5-80h60M1230 600l-30 150M1250 660h150M1240 720l160 20M1290 580l40 280M1350 560l-20 300"/></g>
                <g stroke="#b5d3a1" stroke-width="4"><path d="M805 720c60 80 160 120 240 170M860 720l40 70M1065 700c-20 60-30 90-55 130M1035 1290c-50 60-50 130-75 180M740 1160l50 30M599 1330l140-160M599 1010l70 10M960 1010l20 40"/></g>
                <path d="M985 1060q20 40 30 90l30 35M1205 1140q80-20 195-15M690 1020l10 20" stroke="#aad0df" stroke-width="6" stroke-dasharray="9 5"/>
                <path d="M936 202c-20 80-50 100-47 200l20 150M599 275l30-15M865 530c70-30 130-50 200-35l30-20 30 30 80 10 70-30 50 40M1305 202l45 150 5 160 20 70 5 60 22 40M1190 780c-80 110-100 100-150 115l-85 85M1402 930l-85 105-80 70M1220 1155l60 10 90-20 32 30M1317 1035c30 40 45 60 50 120M1375 840l5 100" stroke="#cbcbc6" stroke-width="5"/>
                <path d="M936 202c-20 80-50 100-47 200l20 150M599 275l30-15M865 530c70-30 130-50 200-35l30-20 30 30 80 10 70-30 50 40M1305 202l45 150 5 160 20 70 5 60 22 40M1190 780c-80 110-100 100-150 115l-85 85M1402 930l-85 105-80 70M1220 1155l60 10 90-20 32 30M1317 1035c30 40 45 60 50 120M1375 840l5 100" stroke="#fff" stroke-width="3"/>
                <path d="M650 1497c120-80 140-130 180-220 70-160 140-270 210-340 80-50 150-50 200-70 60-30 100-60 161-110" stroke="#6e6e6c" stroke-width="5"/><path d="M650 1497c120-80 140-130 180-220 70-160 140-270 210-340 80-50 150-50 200-70 60-30 100-60 161-110" stroke="#aaa9a5" stroke-width="2" stroke-dasharray="16 16"/>
                <path d="M606 202c60 100 100 180 142 255 60 40 80 50 127 110M985 602c60 20 120 80 205 140M1190 785l15-50c30-60 30-110 55-132 80 0 90-40 142-18M1285 970c-50 140-60 200-80 220-15 110-50 180-80 220-15 30-25 50-38 87" stroke="#dba56c" stroke-width="8"/>
                <path d="M606 202c60 100 100 180 142 255 60 40 80 50 127 110M985 602c60 20 120 80 205 140M1190 785l15-50c30-60 30-110 55-132 80 0 90-40 142-18M1285 970c-50 140-60 200-80 220-15 110-50 180-80 220-15 30-25 50-38 87" stroke="#f6cf9b" stroke-width="5"/>
                <path d="M1205 750c80 30 130 90 197 90" stroke="#d8da96" stroke-width="7"/><path d="M1205 750c80 30 130 90 197 90" stroke="#f6f7ba" stroke-width="5"/>
                <path d="M599 825c100-90 130-150 386-152 200 20 210 40 240 170 20 130 60 150 177 240" stroke="#d98a76" stroke-width="11"/><path d="M599 825c100-90 130-150 386-152 200 20 210 40 240 170 20 130 60 150 177 240" stroke="#eaac9b" stroke-width="8"/><path d="M618 815l12 20 20-15" stroke="#e29b88" stroke-width="4"/>
                <path d="M1195 780l10-50M1285 985l5-20" stroke="#f6cf9b" stroke-width="6"/>
                <g fill="#f4d6b8"><path d="M1080 280l15-10 5 25-20 10zM1035 395l20-8-3 25-20 5zM1263 385h8v30h-8zM670 875l12-5 3 15-13 5zM620 920l10-8 5 25-12 8zM1030 920l15 5-5 25-10-5zM1065 1470l20-5-5 25-18-3z"/></g>
                <g fill="#c58f57"><path d="M824 928l13 32h-26zM1285 1226l13 32h-26z"/></g>
              </svg>
              <g class="lbl"><text x="224" y="100">Penton Grafton</text><text x="391" y="135">Charlton Village</text><text x="-5" y="158">Fyfield</text><text x="176" y="158">Weyhill</text><text x="240" y="191">Penton Corner</text><text x="437" y="218">Portway</text><text x="0" y="232">ton</text><text x="372" y="270">Burghclere</text><text x="399" y="299">Down</text><text x="27" y="350">Amport</text><text x="127" y="346">Monxton</text><text x="237" y="414">Abbotts Ann</text><text x="439" y="404">Upper Clatford</text><text x="503" y="323">R</text></g>
            </svg>

            <svg class="t2" width="512" height="512" viewBox="0 0 512 512" aria-label="Map of Andover">
              <svg width="512" height="512" viewBox="39 34 1434 1434" fill="none" stroke-linecap="round" stroke-linejoin="round">
                <defs><pattern id="st2" width="44" height="40" patternUnits="userSpaceOnUse" patternTransform="rotate(24)"><rect width="44" height="40" fill="#dad9da"/><path d="M0 12h44M14 0v40M0 30h26M32 12v28" stroke="#cbcacd" stroke-width="2.500"/></pattern></defs>
                <rect x="39" y="34" width="1434" height="1434" fill="#edefd7"/>
                <g fill="#d3e8b2"><path d="M290 110l30-70 15 60-25 60zM350 150l60-116h40l-30 60zM980 34h50l120 160-40 40-50-60zM1130 290l90-30 60 100-90 80zM720 80l50-40 50 50-60 20zM640 720l-60-10-80 70 20 20 110-60zM520 800l-40 80 60 60-100 20-60-60-60 60zM990 620l-60 130 30 30 60-80zM1380 850l50-30 43 40v60l-60-20zM39 1010l150 160 20 298H39zM320 1270l160-30 60 228H400zM620 1270l80-20 80 130-120-10zM1200 960l80-20 0 60-60 40zM1340 1080l60 40-20 50-60-20zM1000 1400l180-20 80 88H890zM1440 34h33v300l-40-60z"/></g>
                <g fill="url(#st2)"><path d="M290 150l-100 40-120 80-30 130v520l110-70 120 60 20 60h90l80-140 60-30 110-80 30-90 60 10 20-80 110-20-40-130-60-130-70-120 20-120-140-60-90 60zM420 400l280 10 80 60 60 20-160 130-60-90-80-40-110 0zM39 940l110 0 120 110H170zM850 640l140-20 10 30-110 130-30 20 80 60-110 60-60-120 70-20z"/></g>
                <g fill="#b3cfa0"><path d="M1250 545l120-5 103 20v320l-100 30-130-40-130-130-40-70 30-60 100-50zM1000 700l80 20 60 80 90 90 30 50-80 40-120 0-80-20 20-60-50-60zM1000 1030l140 10 50 30 60 110 150 70-40 100-30 50-90-10-60 10-120 20-30 48H540l60-60 90 10 120-20-110-60 10-70 70-20 0-60 60-80zM1210 430l40 0-20 80-60 20zM1120 130l10 60-60 0zM440 34h110v30zM300 590l50-30-40 110-30-30zM420 1045l40 10-10 30-30-10zM390 450l40 30-30 10z"/></g>
                <path d="M870 970l30-10 15 50M1230 1070l70-25M575 1065l30 45M920 125l50 40M1390 220l20 50" stroke="#b3cfa0" stroke-width="10"/>
                <path d="M455 1015l230-80 30 50 20 75-110 50-40 12-80-60z" fill="#e8dbe8"/><path d="M1345 597l110 0 0 28-110-8z" fill="#edefd7"/>
                <g fill="#e1f5e0"><path d="M410 34l140 40 0 50-60-30-80-20zM700 650l120-15 30 60-20 50-80 5zM550 570l50-20 10 30-50 20zM400 640l70 30-20 30-50-40zM790 400l30 40-60 20z"/></g><g fill="#c9f2cd"><path d="M560 260l-110 70 10-30 80-50zM205 420l50-30 10 30-40 20zM140 880l40-20-10 40zM430 150l50 30-10 30-40-40zM100 290h20v40h-20z"/></g>
                <g fill="#9adfc1"><circle cx="485" cy="75" r="15"/><circle cx="809" cy="714" r="15"/><path d="M705 665l35-12 5 20-33 15zM757 650l28-8 5 20-25 8zM790 645l28-5 5 20-25 8zM772 675l40-5 5 15-30 8zM480 640l50-15 5 20-45 15zM345 665l20-15 10 30-25 8zM100 255l20-5 0 20-18 5z"/></g>
                <g stroke="#b0d1dd"><path d="M39 450c60 10 80-20 160-30 60 40 80 90 70 160 10 60-30 70-70 40M39 980c100-20 80-120 140-110 60 0 90-40 110-70M230 700l40 90" stroke-width="14"/><path d="M90 1050l30 150c20 60 30 120 50 160l60 70M39 960l20-20" stroke-width="15"/></g><path d="M60 950l40-20 10 60-70 50zM1400 1468l73-90v90z" fill="#b0d1dd"/>
                <g fill="#f4d6b8"><path d="M1330 275l50 0-10 50-40 10-15-20zM985 540l45-25 80 0-70 20 0 40-20-10zM800 105l20-5-5 15zM750 1040l12 5-22 50-8-5zM430 1200l30 10-20 15-20-5zM1320 1330l25-10 0 35-28-5zM445 955l20-5-5 15z"/></g>
                <g stroke="#c4c3c6" stroke-width="4.500"><path d="M600 195l210-90M1330 34l-5 35-50 70 30 40M495 780l240 110M775 970c-50 80-40 140-65 180-30 0-30 50 0 50M680 1195c-150 30-250 0-370 80l-100 90M1000 600c60 80 80 100 110 165l140 110c120 0 130 60 210 80M960 975l60 50 60 0M265 1185l-80 50-50-10M800 480l-60 100M820 490l50 60"/></g>
                <g stroke="#b5d3a1" stroke-width="7"><path d="M775 34l45 50 105-50M650 250l50 120M400 1000l130 440M330 1270h60M1430 1210l30-250M1470 120l-340 150M1470 100l-340 145"/><path d="M1105 34c50 30 15 130 15 240" stroke="#84ae7d"/></g>
                <path d="M1120 275l100-5 15 45 240 80" stroke="#b9a3b5" stroke-width="6" stroke-dasharray="14 10"/>
                <path d="M595 34c-10 100 0 150-20 170M555 255L440 340l-120 40M275 155c-60-10-80 60-200 115l-10 160M39 565l90 45 50-20M39 730l35-95 60-20M39 830l120-65M1110 285c-120 70-160 60-240 90-80 50-80 50-150 65M670 470c-110 30-150 20-125 110 40 90 30 80-20 95-80 20-100 50-160 85M275 810l-60 60-10 70-60 40M55 1170c-10-80 0-120 35-130 40 20 30 60 35 160H70M60 1170c20 200 60 90 60 200l80 60" stroke="#c8c7c4" stroke-width="14"/><path d="M595 34c-10 100 0 150-20 170M555 255L440 340l-120 40M275 155c-60-10-80 60-200 115l-10 160M39 565l90 45 50-20M39 730l35-95 60-20M39 830l120-65M1110 285c-120 70-160 60-240 90-80 50-80 50-150 65M670 470c-110 30-150 20-125 110 40 90 30 80-20 95-80 20-100 50-160 85M275 810l-60 60-10 70-60 40M55 1170c-10-80 0-120 35-130 40 20 30 60 35 160H70M60 1170c20 200 60 90 60 200l80 60" stroke="#fff" stroke-width="9"/>
                <path d="M75 630c120-80 200-200 420-225 60-10 150 10 210-10 150-60 250-120 420-180l348-140" stroke="#6e6e6c" stroke-width="14"/><path d="M75 630c120-80 200-200 420-225 60-10 150 10 210-10 150-60 250-120 420-180l348-140" stroke="#b4b3b0" stroke-width="6" stroke-dasharray="44 44" stroke-linecap="butt"/>
                <path d="M340 34c-20 60-50 80-55 150-10 100 20 200 45 240l3 90M333 515c-50 20-90 60-145 75-80-90-90-60-135-95M333 515l215 20c90-10 100 80 140 140 40 70 60 70 70 120v110c10 20 30 40 35 40M333 515c50 60-10 100-15 270-10 15-60 15-80 15-10-80-50-100-50-205M295 800c0 120-20 100-50 190 20 100 30 200 50 300 10 80 90 120 110 180" stroke="#dba56c" stroke-width="22"/>
                <path d="M340 34c-20 60-50 80-55 150-10 100 20 200 45 240l3 90M333 515c-50 20-90 60-145 75-80-90-90-60-135-95M333 515l215 20c90-10 100 80 140 140 40 70 60 70 70 120v110c10 20 30 40 35 40M333 515c50 60-10 100-15 270-10 15-60 15-80 15-10-80-50-100-50-205M295 800c0 120-20 100-50 190 20 100 30 200 50 300 10 80 90 120 110 180" stroke="#f6cf9b" stroke-width="15"/><circle cx="70" cy="458" r="20" stroke="#dba56c" stroke-width="16"/><circle cx="70" cy="458" r="20" stroke="#f6cf9b" stroke-width="10"/>
                <path d="M680 640c150 0 300-50 480-75 80-20 80-60 180-62M39 745l180 25M1350 1468c10-120 50-100 60-200 0-60 40-50 60-30" stroke="#d8da96" stroke-width="19"/><path d="M680 640c150 0 300-50 480-75 80-20 80-60 180-62M39 745l180 25M1350 1468c10-120 50-100 60-200 0-60 40-50 60-30" stroke="#f6f7ba" stroke-width="13"/>
                <path d="M39 1005c90 40 130 70 210 65 100-15 270-100 400-145 100-30 180 0 250 20 120 40 220 40 290 120 60 100 80 120 284 215" stroke="#d98a76" stroke-width="30"/><path d="M39 1005c90 40 130 70 210 65 100-15 270-100 400-145 100-30 180 0 250 20 120 40 220 40 290 120 60 100 80 120 284 215" stroke="#eaac9b" stroke-width="23"/><path d="M200 1080c0 40 30 25 60 25M260 1030c10-5 30 0 40 10M790 945l40-10" stroke="#e29b88" stroke-width="8"/>
                <path d="M250 990c0 60 10 60 18 120M759 860v45" stroke="#f6cf9b" stroke-width="15"/>
                <path d="M604 822l21 34h-42z" fill="#c58f57"/>
                <rect x="1340" y="451" width="160" height="94" rx="10" fill="#eeecd0" stroke="#cfc89b" stroke-width="4"/>
              </svg>
              <g class="lbl"><text x="95" y="74">Augusta Park</text><text x="104" y="119">East Anton</text><text x="0" y="134">lage</text><text x="274" y="109">Picket Piece</text><text x="136" y="159">Walworth Business</text><text x="211" y="187">Park</text><text x="-1" y="216">y</text><text x="35" y="256" class="town">Andover</text><text x="202" y="277">Picket Twenty</text><text x="96" y="323" text-anchor="end">Rooksbury</text><text x="27" y="351">Mill</text><text x="65" y="403" text-anchor="end">Clatford</text><text x="8" y="515">Goodworth</text><text x="508" y="418">E</text><g class="wood"><text x="309" y="453">Harewood</text><text x="332" y="482">Forest</text></g><text x="475" y="174" class="ref">B3400</text></g>
            </svg>

            <div class="key"><div class="d-flex align-items-center gap-3"><i></i><span>Class Locations</span></div><p>Click orange markers for class details</p></div>
          </div>
        </div>
        <div class="sbar d-flex flex-column"><div class="above"></div><b></b><div class="below"></div></div>
      </div>
    </section>
  </main>
</div>
<script src="https://cdn.jsdelivr.net/npm/bootstrap@5.3.0/dist/js/bootstrap.bundle.min.js"></script>
</body>
</html>
